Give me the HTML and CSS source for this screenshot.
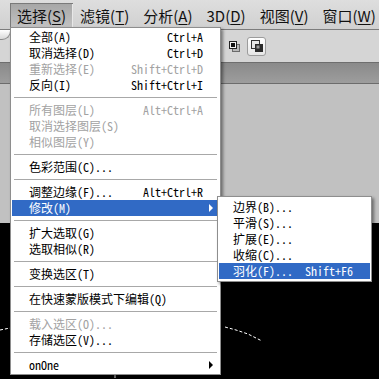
FILE: index.html
```html
<!DOCTYPE html>
<html lang="zh-CN">
<head>
  <meta charset="UTF-8">
  <title>选择菜单</title>
  <link rel="stylesheet" href="styles.css">
</head>
<body>
  <div class="menubar">
    <span class="top-item open">选择(<u>S</u>)</span>
    <span class="top-item">滤镜(<u>T</u>)</span>
    <span class="top-item">分析(<u>A</u>)</span>
    <span class="top-item">3D(<u>D</u>)</span>
    <span class="top-item">视图(<u>V</u>)</span>
    <span class="top-item">窗口(<u>W</u>)</span>
  </div>

  <div class="workspace">
    <div class="options">
      <span class="round-btn"></span>
      <div class="tools">
        <svg class="tool" width="13" height="13" viewBox="0 0 13 13">
          <rect x="4.5" y="4.5" width="7" height="7" fill="#b8b8b8" stroke="#6a6a6a"/>
          <rect x="1.5" y="1.5" width="7" height="7" fill="#f4f4f4" stroke="#222"/>
          <rect x="3" y="3" width="4" height="4" fill="#111"/>
        </svg>
        <span class="tool-btn">
          <svg width="14" height="14" viewBox="0 0 14 14">
            <rect x="1.5" y="1.5" width="8" height="8" fill="#e8e8e8" stroke="#333"/>
            <rect x="5" y="5" width="8" height="8" fill="#2a2a2a"/>
            <rect x="6.5" y="6.5" width="3" height="3" fill="#9a9a9a"/>
          </svg>
        </span>
      </div>
    </div>
    <div class="doc-tab"></div>
    <div class="pasteboard"></div>
    <div class="canvas">
      <svg class="ants" width="379" height="156" viewBox="0 0 379 156">
        <polyline points="0,107 10,105" />
        <polyline points="225,104 236,107 248,111 262,118" />
        <polyline points="115,152 115,156" />
      </svg>
    </div>
  </div>

  <ul class="menu main-menu">
    <li class="item"><span>全部(A)</span><span class="key">Ctrl+A</span></li>
    <li class="item"><span>取消选择(D)</span><span class="key">Ctrl+D</span></li>
    <li class="item off"><span>重新选择(E)</span><span class="key">Shift+Ctrl+D</span></li>
    <li class="item"><span>反向(I)</span><span class="key">Shift+Ctrl+I</span></li>
    <li class="sep"></li>
    <li class="item off"><span>所有图层(L)</span><span class="key">Alt+Ctrl+A</span></li>
    <li class="item off"><span>取消选择图层(S)</span></li>
    <li class="item off"><span>相似图层(Y)</span></li>
    <li class="sep"></li>
    <li class="item"><span>色彩范围(C)...</span></li>
    <li class="sep"></li>
    <li class="item"><span>调整边缘(F)...</span><span class="key">Alt+Ctrl+R</span></li>
    <li class="item hl"><span>修改(M)</span><span class="arrow"></span></li>
    <li class="sep"></li>
    <li class="item"><span>扩大选取(G)</span></li>
    <li class="item"><span>选取相似(R)</span></li>
    <li class="sep"></li>
    <li class="item"><span>变换选区(T)</span></li>
    <li class="sep"></li>
    <li class="item"><span>在快速蒙版模式下编辑(Q)</span></li>
    <li class="sep"></li>
    <li class="item off"><span>载入选区(O)...</span></li>
    <li class="item"><span>存储选区(V)...</span></li>
    <li class="sep"></li>
    <li class="item"><span>onOne</span><span class="arrow"></span></li>
  </ul>

  <ul class="menu sub-menu">
    <li class="item"><span>边界(B)...</span></li>
    <li class="item"><span>平滑(S)...</span></li>
    <li class="item"><span>扩展(E)...</span></li>
    <li class="item"><span>收缩(C)...</span></li>
    <li class="item hl"><span>羽化(F)...</span><span class="key">Shift+F6</span></li>
  </ul>
</body>
</html>
```

FILE: styles.css
```css
body {
  margin: 0;
  width: 379px;
  height: 379px;
  overflow: hidden;
  position: relative;
  background: #c1c1c1;
}

.menubar {
  display: flex;
  height: 30px;
  box-sizing: border-box;
  padding: 3px 0 0 10px;
  background: linear-gradient(#dedede, #d0d0d0);
  border-bottom: 1px solid #7c7c7c;
  font: 15px "Noto Sans CJK SC", sans-serif;
  color: #111;
  white-space: nowrap;
}
.top-item {
  flex: none;
  padding: 0 7px;
  height: 26px;
  line-height: 25px;
}
.top-item u {
  text-underline-offset: 2px;
}
.top-item.open {
  background: linear-gradient(#a6a6a6, #c4c4c4);
  box-shadow: inset 1px 1px #7a7a7a, inset -1px 0 #e8e8e8;
}

.workspace {
  background: #c1c1c1;
}
.options {
  height: 32px;
  display: flex;
  align-items: center;
  background: #d5d5d5;
  border-bottom: 1px solid #6e6e6e;
}
.round-btn {
  align-self: flex-start;
  width: 18px;
  height: 9px;
  margin-left: -9px;
  border: 1px solid #8a8a8a;
  border-top: none;
  border-radius: 0 0 9px 9px;
  background: linear-gradient(#ffffff, #d8d8d8);
}
.tools {
  display: flex;
  align-items: center;
  gap: 6px;
  margin-left: 217px;
}
.tool {
  display: block;
}
.tool-btn {
  display: flex;
  align-items: center;
  justify-content: center;
  width: 17px;
  height: 17px;
  border: 1px solid #9c9c9c;
  border-radius: 3px;
  background: linear-gradient(#ffffff, #e6e6e6);
}
.doc-tab {
  height: 20px;
  background: linear-gradient(#8a8a8a, #9d9d9d);
  border-bottom: 1px solid #6c6c6c;
}
.pasteboard {
  height: 139px;
  background: #c1c1c1;
}
.canvas {
  height: 156px;
  position: relative;
  background: #000;
}
.ants {
  position: absolute;
  left: 0;
  top: 0;
}
.ants polyline {
  fill: none;
  stroke: #fff;
  stroke-width: 1;
  stroke-dasharray: 3 2;
}

.menu {
  position: absolute;
  margin: 0;
  padding: 1px;
  list-style: none;
  box-sizing: border-box;
  background: #fff;
  border: 1px solid #8e8e8e;
  box-shadow: 2px 2px 3px rgba(0, 0, 0, 0.45);
  font: 12px/16px "Noto Sans Mono CJK SC", "Noto Sans CJK SC", monospace;
  color: #000;
}
.main-menu {
  left: 10px;
  top: 27px;
  width: 211px;
}
.sub-menu {
  left: 217px;
  top: 196px;
  width: 155px;
  padding: 2px 1px;
}
.item {
  display: flex;
  align-items: center;
  height: 16px;
  padding: 0 16px 0 17px;
  white-space: nowrap;
}
.sub-menu .item {
  padding: 0 17px 0 14px;
}
.item .key {
  margin-left: auto;
}
.item.off {
  color: #a2a2a2;
}
.item.hl {
  background: #316ac5;
  color: #fff;
}
.arrow {
  margin-left: auto;
  margin-right: -10px;
  width: 0;
  height: 0;
  border-left: 4px solid currentColor;
  border-top: 4px solid transparent;
  border-bottom: 4px solid transparent;
}
.sep {
  height: 1px;
  margin: 4px 2px;
  background: #a8a8a8;
}
```
